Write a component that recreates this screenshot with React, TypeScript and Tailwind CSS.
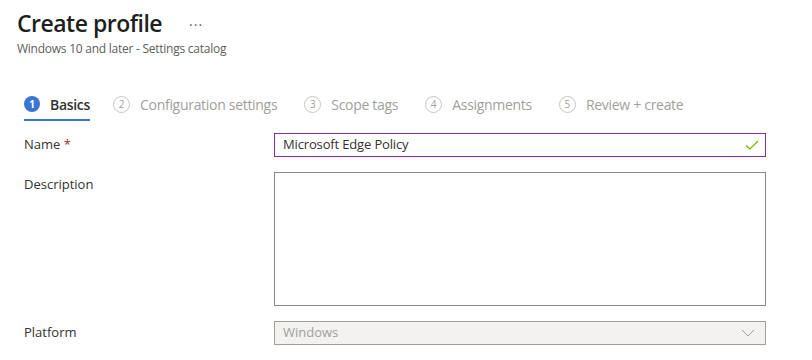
import React from "react";

const font = { fontFamily: '"Segoe UI", "Open Sans", "Noto Sans", sans-serif' };

function Step({ n, label, active, className = "" }: { n: number; label: string; active?: boolean; className?: string }) {
  return (
    <div className={`flex flex-col ${className}`}>
      <div className="flex items-center h-[30px]">
        {active ? (
          <div className="w-4 h-4 rounded-full bg-[#3a76d3] text-white text-[10px] font-bold flex items-center justify-center leading-none">
            {n}
          </div>
        ) : (
          <div className="w-[17px] h-[17px] rounded-full border border-[#c8c6c4] text-[#a19f9d] text-[10px] flex items-center justify-center leading-none">
            {n}
          </div>
        )}
        <span
          className={`ml-[10px] text-[14px] tracking-[-0.3px] ${active ? "text-[#323130] font-semibold" : "text-[#a19f9d]"}`}
        >
          {label}
        </span>
      </div>
      <div className={`h-[2px] ${active ? "bg-[#3a76d3]" : "bg-transparent"}`} />
    </div>
  );
}

export default function App() {
  return (
    <div className="w-[812px] h-[360px] bg-white overflow-hidden text-[#323130]" style={font}>
      <div className="pl-[17px] pt-[6px]">
        <div className="flex items-center">
          <h1 className="text-[23px] font-semibold leading-[34px] tracking-[-0.5px] text-[#201f1e]">Create profile</h1>
          <span className="ml-[27px] text-[#605e5c] text-[14px] tracking-[1px] mt-[2px]">···</span>
        </div>
        <div className="text-[12px] tracking-[-0.25px] text-[#605e5c] leading-[16px] mt-[1px]">
          Windows 10 and later - Settings catalog
        </div>
      </div>
      <div className="pl-[24px] mt-[32px] flex gap-[27px]">
        <Step n={1} label="Basics" active className="-mr-[4px]" />
        <Step n={2} label="Configuration settings" />
        <Step n={3} label="Scope tags" />
        <Step n={4} label="Assignments" />
        <Step n={5} label="Review + create" />
      </div>
      <div className="pl-[24px] pr-[46px] mt-[12px] flex flex-col">
        <div className="flex items-center">
          <div className="w-[250px] text-[13px]">
            Name <span className="text-[#a4262c]">*</span>
          </div>
          <div className="flex-1 h-[24px] border border-[#8031a7] flex items-center px-[8px] text-[13px] tracking-[-0.15px] text-[#323130]">
            <span className="flex-1">Microsoft Edge Policy</span>
            <svg width="14" height="12" viewBox="0 0 14 12" className="mr-[-2px]">
              <path d="M1 6.5 L5 10 L13 2" fill="none" stroke="#6bb700" strokeWidth="1.2" />
            </svg>
          </div>
        </div>
        <div className="flex mt-[15px]">
          <div className="w-[250px] text-[13px] pt-[3px]">Description</div>
          <div className="flex-1 h-[134px] border border-[#8a8886]" />
        </div>
        <div className="flex items-center mt-[15px]">
          <div className="w-[250px] text-[13px]">Platform</div>
          <div className="flex-1 h-[24px] border border-[#a19f9d] bg-[#f3f2f1] flex items-center px-[8px] text-[13px] text-[#a19f9d]">
            <span className="flex-1">Windows</span>
            <svg width="14" height="8" viewBox="0 0 14 8" className="mr-[2px]">
              <path d="M1 1 L7 7 L13 1" fill="none" stroke="#a19f9d" strokeWidth="1" />
            </svg>
          </div>
        </div>
      </div>
    </div>
  );
}
